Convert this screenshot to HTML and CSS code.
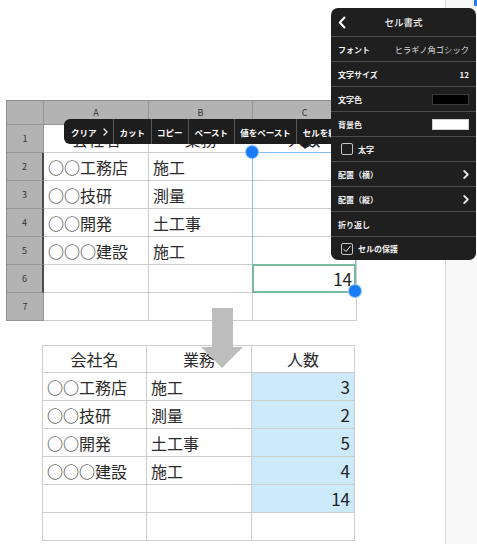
FILE: index.html
```html
<!DOCTYPE html>
<html lang="ja">
<head>
<meta charset="utf-8">
<title>セル書式</title>
<link rel="stylesheet" href="styles.css">
</head>
<body>
<div class="screen">
  <main class="canvas">
    <div class="sheet">
      <div class="hd corner"></div>
      <div class="hd">A</div>
      <div class="hd">B</div>
      <div class="hd col-sel">C</div>

      <div class="hd">1</div>
      <div class="cell center">会社名</div>
      <div class="cell center">業務</div>
      <div class="cell center">人数</div>

      <div class="hd row-sel">2</div>
      <div class="cell">○○工務店</div>
      <div class="cell">施工</div>
      <div class="cell"></div>

      <div class="hd row-sel">3</div>
      <div class="cell">○○技研</div>
      <div class="cell">測量</div>
      <div class="cell"></div>

      <div class="hd row-sel">4</div>
      <div class="cell">○○開発</div>
      <div class="cell">土工事</div>
      <div class="cell"></div>

      <div class="hd row-sel">5</div>
      <div class="cell">○○○建設</div>
      <div class="cell">施工</div>
      <div class="cell"></div>

      <div class="hd row-sel">6</div>
      <div class="cell"></div>
      <div class="cell"></div>
      <div class="cell num">14</div>

      <div class="hd">7</div>
      <div class="cell"></div>
      <div class="cell"></div>
      <div class="cell"></div>
    </div>

    <div class="result">
      <div class="cell center">会社名</div>
      <div class="cell center">業務</div>
      <div class="cell center">人数</div>

      <div class="cell">○○工務店</div>
      <div class="cell">施工</div>
      <div class="cell num hl">3</div>

      <div class="cell">○○技研</div>
      <div class="cell">測量</div>
      <div class="cell num hl">2</div>

      <div class="cell">○○開発</div>
      <div class="cell">土工事</div>
      <div class="cell num hl">5</div>

      <div class="cell">○○○建設</div>
      <div class="cell">施工</div>
      <div class="cell num hl">4</div>

      <div class="cell"></div>
      <div class="cell"></div>
      <div class="cell num hl">14</div>

      <div class="cell"></div>
      <div class="cell"></div>
      <div class="cell"></div>
    </div>
  </main>
  <aside class="side"></aside>

  <!-- overlays -->
  <div class="sel-range"></div>
  <div class="active-cell"></div>
  <div class="handle handle-tl"></div>
  <div class="handle handle-br"></div>

  <div class="ctx">
    <div class="ci">クリア<svg class="ci-chev" viewBox="0 0 5 8" width="5" height="8"><polyline points="1,1 4,4 1,7" fill="none" stroke="#fff" stroke-width="1.3" stroke-linecap="round" stroke-linejoin="round"/></svg></div>
    <div class="ci">カット</div>
    <div class="ci">コピー</div>
    <div class="ci">ペースト</div>
    <div class="ci">値をペースト</div>
    <div class="ci">セルを結合</div>
  </div>
  <div class="ctx-tip"></div>

  <svg class="arrow" viewBox="0 0 42 60" width="42" height="60"><path d="M11 0 H32 V39 H42 L21 60 L0 39 H11 Z" fill="#bdbdbd"/></svg>

  <div class="corner-blue"></div>

  <div class="popup">
    <div class="p-head">
      <svg class="back" viewBox="0 0 8 13" width="8" height="13"><polyline points="6.5,1.5 1.8,6.5 6.5,11.5" fill="none" stroke="#fff" stroke-width="2" stroke-linecap="round" stroke-linejoin="round"/></svg>
      <span class="p-title">セル書式</span>
      <span></span>
    </div>
    <div class="p-row"><span class="lbl">フォント</span><span class="val">ヒラギノ角ゴシック</span></div>
    <div class="p-row"><span class="lbl">文字サイズ</span><span class="lbl">12</span></div>
    <div class="p-row"><span class="lbl">文字色</span><span class="swatch swatch-black"></span></div>
    <div class="p-row"><span class="lbl">背景色</span><span class="swatch swatch-white"></span></div>
    <div class="p-row p-check"><span class="box"></span><span class="lbl">太字</span></div>
    <div class="p-row"><span class="lbl">配置（横）</span><svg class="chev" viewBox="0 0 6 9" width="6" height="9"><polyline points="1.2,1 4.8,4.5 1.2,8" fill="none" stroke="#e6e6e6" stroke-width="1.8" stroke-linecap="round" stroke-linejoin="round"/></svg></div>
    <div class="p-row"><span class="lbl">配置（縦）</span><svg class="chev" viewBox="0 0 6 9" width="6" height="9"><polyline points="1.2,1 4.8,4.5 1.2,8" fill="none" stroke="#e6e6e6" stroke-width="1.8" stroke-linecap="round" stroke-linejoin="round"/></svg></div>
    <div class="p-row"><span class="lbl">折り返し</span></div>
    <div class="p-row p-check p-last"><span class="box box-on"><svg viewBox="0 0 12 12" width="10" height="10"><polyline points="2,6.2 4.8,9 10,2.6" fill="none" stroke="#e6e6e6" stroke-width="1.2" stroke-linecap="round" stroke-linejoin="round"/></svg></span><span class="lbl">セルの保護</span></div>
  </div>
</div>
</body>
</html>
```

FILE: styles.css
```css
html, body {
  margin: 0;
  padding: 0;
  background: #fff;
}
body {
  font-family: "Noto Sans CJK JP", "Noto Sans", sans-serif;
  color: #2a2a2a;
}
.screen {
  position: relative;
  width: 477px;
  height: 544px;
  overflow: hidden;
  display: flex;
  background: #fff;
}
.canvas {
  width: 445px;
  flex: none;
  padding-top: 100px;
  box-sizing: border-box;
}
.side {
  flex: 1;
  background: #f8f8f8;
  border-left: 1px solid #d9d9d9;
}

/* top spreadsheet */
.sheet {
  display: grid;
  grid-template-columns: 37px 105px 104px 104px;
  grid-template-rows: 24px repeat(7, 28px);
  margin-left: 6px;
  width: max-content;
  border-left: 1px solid #8e8e8e;
  border-top: 1px solid #8e8e8e;
}
.sheet > div,
.result > div {
  box-sizing: border-box;
  border-right: 1px solid #cdcdcd;
  border-bottom: 1px solid #cdcdcd;
  display: flex;
  align-items: center;
  padding: 0 4px;
  font-size: 16px;
  line-height: 1;
  white-space: nowrap;
  overflow: hidden;
}
.sheet > .hd {
  background: #b3b3b3;
  border-color: #949494;
  justify-content: center;
  font-size: 9px;
  color: #333;
  padding: 0;
}
.sheet > .row-sel {
  border-right: 2px solid #4a4a4a;
}
.sheet > .col-sel {
  border-bottom: 2px solid #4a4a4a;
}
.cell.center {
  justify-content: center;
  font-size: 16px;
}
.cell.num {
  justify-content: flex-end;
  font-size: 17px;
  color: #222;
}

/* bottom result table */
.result {
  display: grid;
  grid-template-columns: 104px 105px 103px;
  grid-template-rows: 27px repeat(6, 28px);
  margin: 24px 0 0 42px;
  width: max-content;
  border-left: 1px solid #cdcdcd;
  border-top: 1px solid #cdcdcd;
}
.result > .hl {
  background: #cdeafb;
}

/* selection overlays */
.sel-range {
  position: absolute;
  left: 252px;
  top: 152px;
  width: 104px;
  height: 113px;
  box-sizing: border-box;
  border: 1.5px solid #83bdf6;
}
.active-cell {
  position: absolute;
  left: 252px;
  top: 264px;
  width: 104px;
  height: 29px;
  box-sizing: border-box;
  border: 2px solid #79bb9f;
}
.handle {
  position: absolute;
  width: 12px;
  height: 12px;
  border-radius: 50%;
  background: #1a7cf4;
  box-shadow: 0 0 0 1px #8fc2fa;
}
.handle-tl { left: 246px; top: 146px; }
.handle-br { left: 349px; top: 285px; }

/* context menu */
.ctx {
  position: absolute;
  left: 64px;
  top: 119px;
  height: 25px;
  display: flex;
  background: #1d1d1d;
  border-radius: 6px 0 0 6px;
  color: #fff;
  font-size: 8.5px;
  font-weight: 700;
}
.ci {
  display: flex;
  align-items: center;
  gap: 6px;
  padding: 0 5.5px;
  border-left: 1px solid #585858;
  white-space: nowrap;
}
.ci:first-child {
  border-left: none;
  padding-left: 7px;
}
.ctx-tip {
  position: absolute;
  left: 300px;
  top: 144px;
  width: 0;
  height: 0;
  border-left: 5px solid transparent;
  border-right: 5px solid transparent;
  border-top: 5px solid #1d1d1d;
}

.arrow {
  position: absolute;
  left: 201px;
  top: 308px;
}
.corner-blue {
  position: absolute;
  right: 0;
  top: 0;
  width: 3px;
  height: 6px;
  background: #2b7cf0;
}

/* format popup */
.popup {
  position: absolute;
  left: 331px;
  top: 8px;
  width: 145px;
  background: #1f1f1f;
  border-radius: 7px;
  color: #f2f2f2;
  overflow: hidden;
}
.p-head {
  height: 29px;
  box-sizing: border-box;
  border-bottom: 1px solid #4c4c4c;
  display: grid;
  grid-template-columns: 1fr auto 1fr;
  align-items: center;
  padding: 0 7px;
}
.back { justify-self: start; }
.p-title {
  font-size: 9.5px;
  font-weight: 500;
  color: #f0f0f0;
}
.p-row {
  height: 25px;
  box-sizing: border-box;
  border-bottom: 1px solid #4c4c4c;
  display: flex;
  align-items: center;
  justify-content: space-between;
  padding: 0 7px;
}
.p-last {
  height: 23px;
  border-bottom: none;
}
.p-check {
  justify-content: flex-start;
  gap: 5px;
  padding-left: 10px;
}
.lbl {
  font-size: 8px;
  font-weight: 700;
  white-space: nowrap;
}
.val {
  font-size: 8.3px;
  color: #dcdcdc;
  white-space: nowrap;
}
.swatch {
  width: 37px;
  height: 11px;
  box-sizing: border-box;
  border: 1px solid #3a3a3a;
}
.swatch-black { background: #000; }
.swatch-white { background: #fff; border-color: #cfcfcf; }
.box {
  width: 12px;
  height: 12px;
  box-sizing: border-box;
  border: 1.2px solid #c4c4c4;
  border-radius: 2px;
  display: flex;
  align-items: center;
  justify-content: center;
}
```
